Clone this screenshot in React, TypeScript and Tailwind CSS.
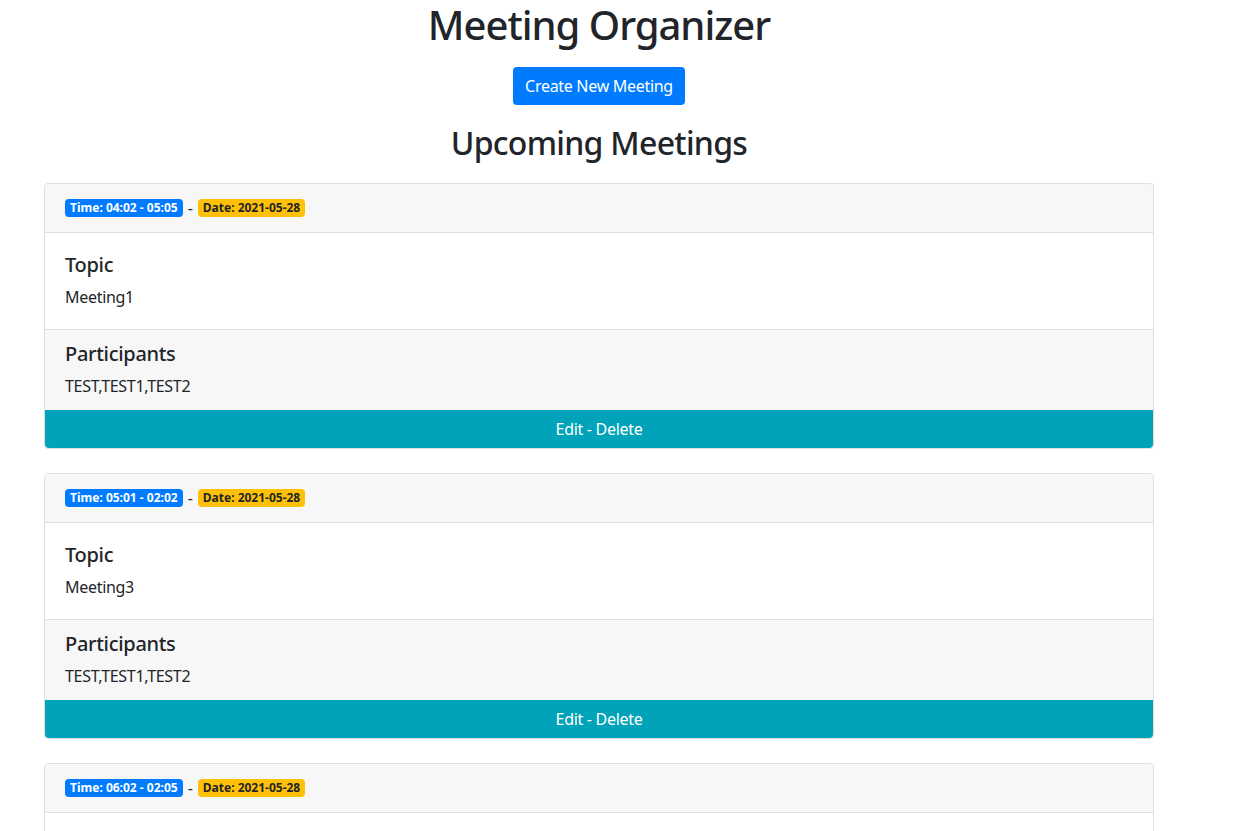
const meetings = [
  { time: "04:02 - 05:05", date: "2021-05-28", topic: "Meeting1", participants: "TEST,TEST1,TEST2" },
  { time: "05:01 - 02:02", date: "2021-05-28", topic: "Meeting3", participants: "TEST,TEST1,TEST2" },
  { time: "06:02 - 02:05", date: "2021-05-28", topic: "Meeting4", participants: "TEST,TEST1,TEST2" },
];

function MeetingCard({ m }: { m: (typeof meetings)[number] }) {
  return (
    <div className="mx-auto w-[1110px] mb-6 rounded border border-[#dfdfdf] bg-white">
      {/* Header with badges */}
      <div className="flex items-center h-[49px] px-5 bg-[#f7f7f7] border-b border-[#dfdfdf] rounded-t tracking-normal">
        <span className="inline-flex items-center h-[18px] px-[5px] rounded bg-[#007bff] text-white text-[12px] font-bold leading-none">
          Time: {m.time}
        </span>
        <span className="mx-[5px] text-[16px]">-</span>
        <span className="inline-flex items-center h-[18px] px-[5px] rounded bg-[#ffc107] text-[#212529] text-[12px] font-bold leading-none">
          Date: {m.date}
        </span>
      </div>

      {/* Topic */}
      <div className="px-5 py-5">
        <h5 className="text-[20px] leading-[24px] font-medium mb-2">Topic</h5>
        <p className="text-[16px] leading-[24px]">{m.topic}</p>
      </div>

      {/* Participants */}
      <div className="px-5 py-3 bg-[#f7f7f7] border-t border-[#dfdfdf]">
        <h5 className="text-[20px] leading-[24px] font-medium mb-2">Participants</h5>
        <p className="text-[16px] leading-[24px]">{m.participants}</p>
      </div>

      <button className="block w-full h-[38px] bg-[#00a3b9] text-white text-[16px] rounded-b">
        Edit - Delete
      </button>
    </div>
  );
}

export default function App() {
  return (
    <div
      className="w-[1198px] bg-white text-[#212529] h-[831px] overflow-hidden tracking-[-0.3px]"
      style={{ fontFamily: '"Noto Sans", "Open Sans", sans-serif' }}
    >
      <h1 className="text-center text-[40px] leading-[48px] font-medium tracking-[-1px] pt-[1px]">
        Meeting Organizer
      </h1>
      <div className="flex justify-center mt-[18px]">
        <button className="h-[38px] px-3 rounded bg-[#007bff] text-white text-[16px]">
          Create New Meeting
        </button>
      </div>
      <h2 className="text-center text-[32px] leading-[38px] font-medium tracking-[-0.7px] mt-[19px] mb-[21px]">
        Upcoming Meetings
      </h2>
      {meetings.map((m) => (
        <MeetingCard key={m.topic} m={m} />
      ))}
    </div>
  );
}
